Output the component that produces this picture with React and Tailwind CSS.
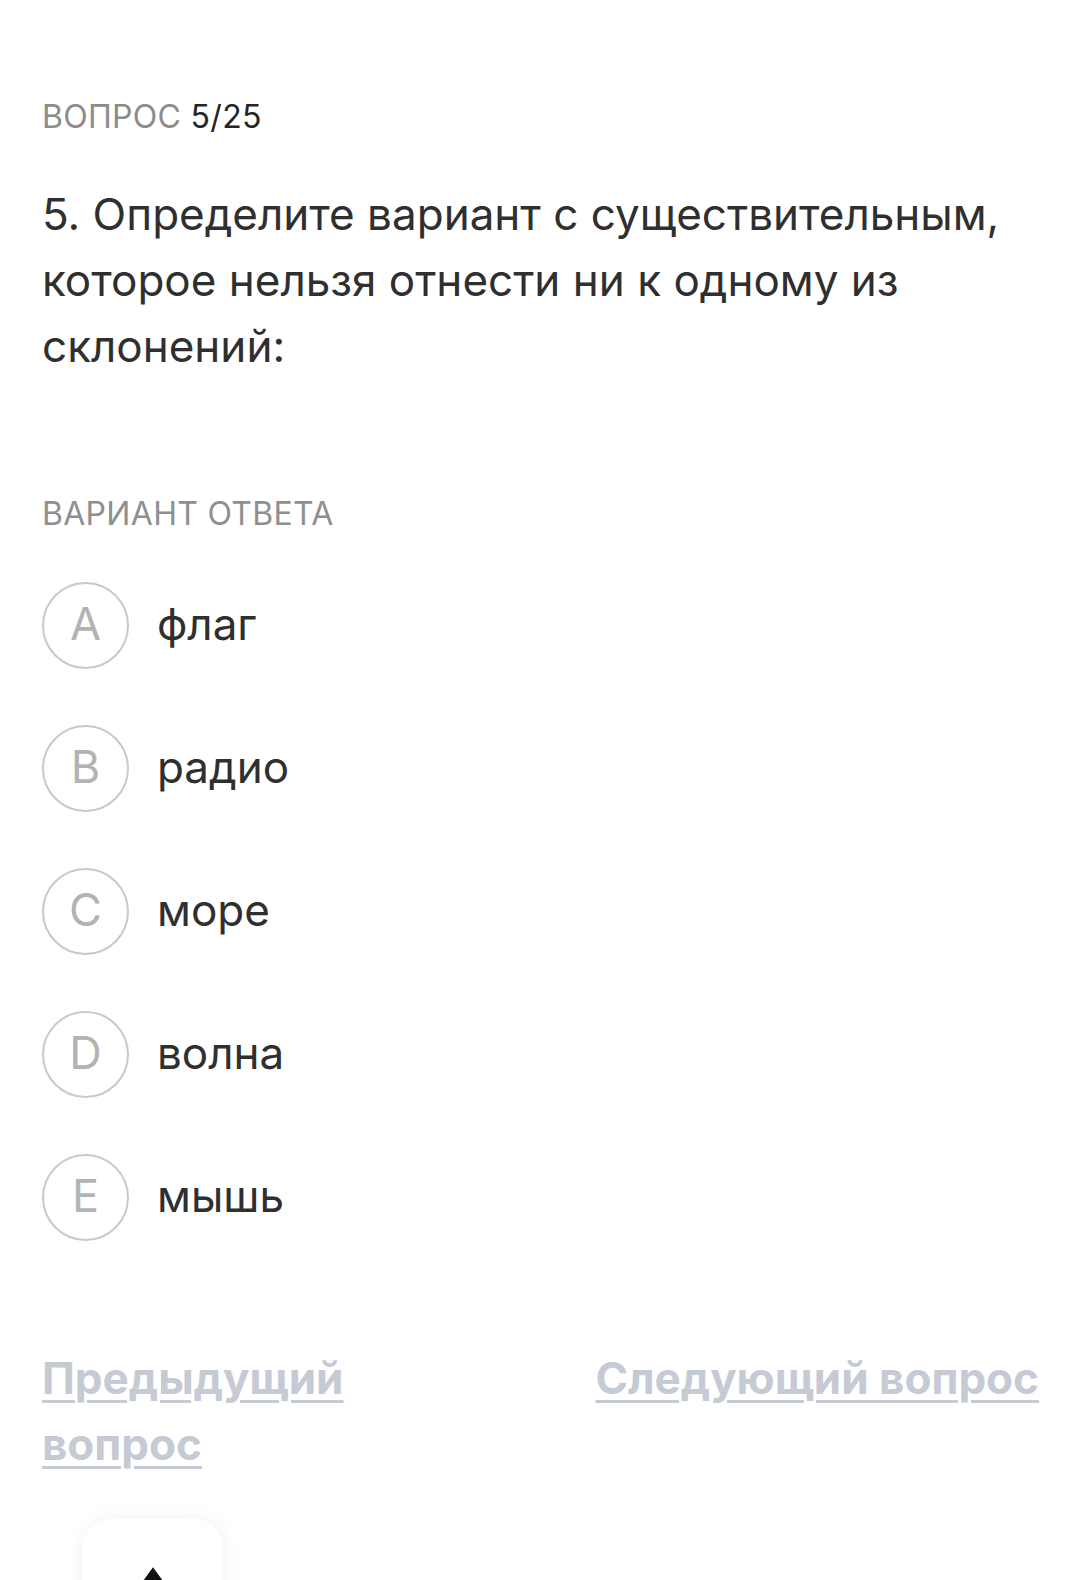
import React from "react";

const options = [
  ["A", "флаг"],
  ["B", "радио"],
  ["C", "море"],
  ["D", "волна"],
  ["E", "мышь"],
];

export default function App() {
  return (
    <div
      className="w-[1080px] h-[1580px] overflow-hidden bg-white pl-[42px] pr-[41px] pt-[97px]"
      style={{ fontFamily: "Inter, 'Noto Sans', sans-serif" }}
    >
      <div className="text-[32px] leading-[40px] tracking-[0.3px]">
        <span className="text-[#8c8c8c]">ВОПРОС </span>
        <span className="text-[#252525]">5/25</span>
      </div>

      <div className="mt-[44px] text-[44px] leading-[66px] text-[#2f2f2f]">
        5. Определите вариант с существительным, которое нельзя отнести ни к одному из склонений:
      </div>

      <div className="mt-[115px] text-[32px] leading-[40px] text-[#8f8f8f] tracking-[0.3px]">
        ВАРИАНТ ОТВЕТА
      </div>

      <div className="mt-[48px] flex flex-col gap-[56px]">
        {options.map(([l, t]) => (
          <div key={l} className="flex items-center gap-[28px]">
            <div className="w-[87px] h-[87px] rounded-full border-2 border-[#c9c9c9] flex items-center justify-center text-[45px] text-[#b3b3b3] leading-none pb-[4px]">
              {l}
            </div>
            <div className="text-[44px] leading-[50px] text-[#2f2f2f] pb-[4px]">{t}</div>
          </div>
        ))}
      </div>

      <div className="mt-[104px] flex justify-between items-start">
        <a className="max-w-[420px] text-[44px] leading-[66px] font-bold text-[#c5cad4] underline decoration-[3px] underline-offset-[6px]">
          Предыдущий вопрос
        </a>
        <a className="text-[44px] leading-[66px] font-bold text-[#c5cad4] underline decoration-[3px] underline-offset-[6px]">
          Следующий вопрос
        </a>
      </div>

      <div className="mt-[42px] ml-[41px] w-[140px] h-[140px] rounded-[28px] bg-white shadow-[0_0_20px_rgba(0,0,0,0.06)] flex justify-center pt-[46px]">
        <svg width="32" height="32" viewBox="0 0 30 30">
          <path d="M15 2 L28 20 L2 20 Z" fill="#111" />
        </svg>
      </div>
    </div>
  );
}
